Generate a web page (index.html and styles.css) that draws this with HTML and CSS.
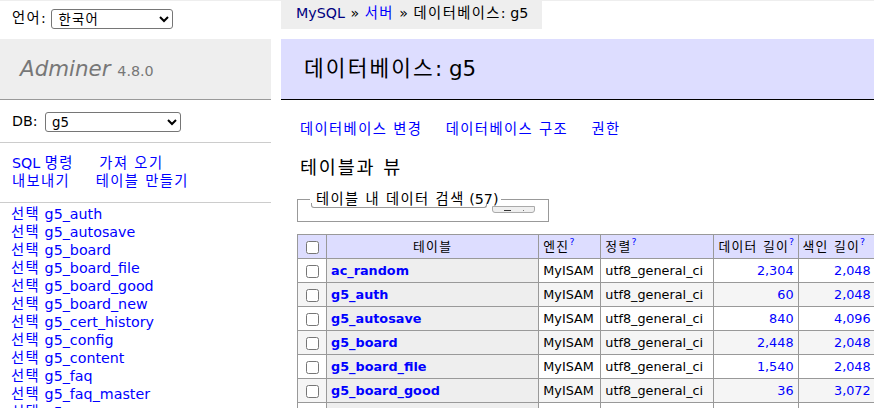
FILE: index.html
```html
<!DOCTYPE html>
<html lang="ko">
<head>
<meta charset="utf-8">
<title>데이터베이스: g5 - Adminer</title>
<link rel="stylesheet" href="styles.css">
</head>
<body>
<div class="page">
  <aside class="side">
    <div class="lang"><span class="ko">언어</span>: <select class="lang-select"><option>한국어</option></select></div>
    <h1 class="logo"><a href="#" class="brand">Adminer</a> <span class="version">4.8.0</span></h1>
    <p class="dbs">DB: <select class="db-select"><option>g5</option></select></p>
    <p class="side-links"><a href="#">SQL <span class="ko">명령</span></a> <a href="#" class="ko">가져 오기</a><br><a href="#" class="ko">내보내기</a> <a href="#" class="ko">테이블 만들기</a></p>
    <ul class="tables">
      <li><a href="#" class="ko">선택</a> <a href="#">g5_auth</a></li>
      <li><a href="#" class="ko">선택</a> <a href="#">g5_autosave</a></li>
      <li><a href="#" class="ko">선택</a> <a href="#">g5_board</a></li>
      <li><a href="#" class="ko">선택</a> <a href="#">g5_board_file</a></li>
      <li><a href="#" class="ko">선택</a> <a href="#">g5_board_good</a></li>
      <li><a href="#" class="ko">선택</a> <a href="#">g5_board_new</a></li>
      <li><a href="#" class="ko">선택</a> <a href="#">g5_cert_history</a></li>
      <li><a href="#" class="ko">선택</a> <a href="#">g5_config</a></li>
      <li><a href="#" class="ko">선택</a> <a href="#">g5_content</a></li>
      <li><a href="#" class="ko">선택</a> <a href="#">g5_faq</a></li>
      <li><a href="#" class="ko">선택</a> <a href="#">g5_faq_master</a></li>
      <li><a href="#" class="ko">선택</a> <a href="#">g5_group</a></li>
      <li><a href="#" class="ko">선택</a> <a href="#">g5_group_member</a></li>
    </ul>
  </aside>
  <main class="main">
    <p class="crumb"><a href="#" class="visited">MySQL</a> <span class="sep">»</span> <a href="#" class="ko">서버</a> <span class="sep">»</span> <span class="ko">데이터베이스</span>: g5</p>
    <div class="content">
      <h2 class="title"><span class="ko">데이터베이스</span>: g5</h2>
      <p class="links"><a href="#" class="ko">데이터베이스 변경</a> <a href="#" class="ko">데이터베이스 구조</a> <a href="#" class="ko">권한</a></p>
      <h3 class="subtitle ko">테이블과 뷰</h3>
      <fieldset class="search">
        <legend class="search-legend"><span class="ko">테이블 내 데이터 검색</span> (57)</legend>
        <span class="mini-btn"><span class="dash"></span><span class="dot"></span></span>
      </fieldset>
      <table class="tbl">
        <colgroup>
          <col class="c-check"><col class="c-name"><col class="c-engine"><col class="c-coll"><col class="c-data"><col class="c-index"><col class="c-free"><col class="c-auto"><col class="c-rows"><col class="c-comment">
        </colgroup>
        <thead>
          <tr>
            <td><input type="checkbox" class="chk"></td>
            <th class="center ko">테이블</th>
            <td><span class="ko">엔진</span><a href="#" class="q">?</a></td>
            <td><span class="ko">정렬</span><a href="#" class="q">?</a></td>
            <td><span class="ko">데이터 길이</span><a href="#" class="q">?</a></td>
            <td><span class="ko">색인 길이</span><a href="#" class="q">?</a></td>
            <td><span class="ko">데이터 여유</span><a href="#" class="q">?</a></td>
            <td><span class="ko">자동 증가</span><a href="#" class="q">?</a></td>
            <td><span class="ko">행</span><a href="#" class="q">?</a></td>
            <td class="ko">설명</td>
          </tr>
        </thead>
        <tbody>
          <tr><td><input type="checkbox" class="chk"></td><th><a href="#">ac_random</a></th><td>MyISAM</td><td>utf8_general_ci</td><td class="num"><a href="#">2,304</a></td><td class="num"><a href="#">2,048</a></td><td class="num"><a href="#">0</a></td><td class="num"><a href="#">97</a></td><td class="num">96</td><td></td></tr>
          <tr><td><input type="checkbox" class="chk"></td><th><a href="#">g5_auth</a></th><td>MyISAM</td><td>utf8_general_ci</td><td class="num"><a href="#">60</a></td><td class="num"><a href="#">2,048</a></td><td class="num"><a href="#">0</a></td><td class="num"></td><td class="num">2</td><td></td></tr>
          <tr><td><input type="checkbox" class="chk"></td><th><a href="#">g5_autosave</a></th><td>MyISAM</td><td>utf8_general_ci</td><td class="num"><a href="#">840</a></td><td class="num"><a href="#">4,096</a></td><td class="num"><a href="#">0</a></td><td class="num"><a href="#">4</a></td><td class="num">3</td><td></td></tr>
          <tr><td><input type="checkbox" class="chk"></td><th><a href="#">g5_board</a></th><td>MyISAM</td><td>utf8_general_ci</td><td class="num"><a href="#">2,448</a></td><td class="num"><a href="#">2,048</a></td><td class="num"><a href="#">0</a></td><td class="num"></td><td class="num">6</td><td></td></tr>
          <tr><td><input type="checkbox" class="chk"></td><th><a href="#">g5_board_file</a></th><td>MyISAM</td><td>utf8_general_ci</td><td class="num"><a href="#">1,540</a></td><td class="num"><a href="#">2,048</a></td><td class="num"><a href="#">0</a></td><td class="num"></td><td class="num">7</td><td></td></tr>
          <tr><td><input type="checkbox" class="chk"></td><th><a href="#">g5_board_good</a></th><td>MyISAM</td><td>utf8_general_ci</td><td class="num"><a href="#">36</a></td><td class="num"><a href="#">3,072</a></td><td class="num"><a href="#">0</a></td><td class="num"><a href="#">2</a></td><td class="num">1</td><td></td></tr>
          <tr><td><input type="checkbox" class="chk"></td><th><a href="#">g5_board_new</a></th><td>MyISAM</td><td>utf8_general_ci</td><td class="num"><a href="#">1,872</a></td><td class="num"><a href="#">3,072</a></td><td class="num"><a href="#">0</a></td><td class="num"><a href="#">53</a></td><td class="num">52</td><td></td></tr>
        </tbody>
      </table>
    </div>
  </main>
</div>
</body>
</html>
```
FILE: styles.css
```css
html, body {
  margin: 0;
  padding: 0;
}
body {
  background: #fff;
  color: #000;
  font: 14.25px/1.25 "DejaVu Sans", "Noto Sans CJK KR", sans-serif;
  overflow: hidden;
}
a {
  color: #00f;
  text-decoration: none;
}
a.visited {
  color: #000080;
}
.ko {
  letter-spacing: 0.1em;
}

.page {
  display: grid;
  grid-template-columns: 271px minmax(0, 1fr);
  column-gap: 10px;
  border-top: 1px solid #eee;
  align-items: start;
}

/* ---------- sidebar ---------- */
.lang {
  height: 38px;
  box-sizing: border-box;
  padding: 4px 12px 0;
  line-height: 26px;
  white-space: nowrap;
}
.lang-select,
.db-select {
  height: 20px;
  box-sizing: border-box;
  vertical-align: middle;
  font: 13.33px "DejaVu Sans", "Noto Sans CJK KR", sans-serif;
  padding: 0 0 0 2px;
  border: 1px solid #767676;
  border-radius: 3px;
  background: #fff;
  color: #000;
}
.lang-select {
  width: 122px;
  margin: 0 0 0 1px;
  letter-spacing: 0.1em;
}
.db-select {
  width: 136px;
  margin: 0 0 0 3px;
}

.logo {
  margin: 0;
  padding: 17px 20px;
  height: 26px;
  line-height: 26px;
  font-size: 21.4px;
  font-weight: normal;
  color: #777;
  background: #eee;
  border-bottom: 1px solid #999;
  white-space: nowrap;
}
.brand {
  color: #777;
  font-style: italic;
}
.version {
  font-size: 14.3px;
  line-height: 1;
  color: #777;
}

.dbs {
  margin: 0;
  height: 18px;
  padding: 12px 12px;
  line-height: 18px;
  border-bottom: 1px solid #ccc;
  white-space: nowrap;
}
.side-links {
  margin: 0;
  height: 36px;
  padding: 11px 12px 12px;
  line-height: 18px;
  border-bottom: 1px solid #ccc;
}
.side-links a {
  margin-right: 21px;
  white-space: nowrap;
}
.tables {
  margin: 0;
  padding: 2px 11px 12px;
  list-style: none;
  line-height: 18px;
  white-space: nowrap;
}

/* ---------- main ---------- */
.crumb {
  margin: 0;
  width: fit-content;
  height: 28px;
  padding: 0 14px 0 15px;
  line-height: 24px;
  background: #eee;
  white-space: nowrap;
}
.sep {
  margin: 0 1px;
}
.content {
  padding: 10px 0 0 16px;
}
.title {
  margin: 0 0 20px -16px;
  padding: 17px 23px;
  height: 26px;
  font-size: 21.4px;
  line-height: 26px;
  font-weight: normal;
  background: #ddf;
  border-bottom: 1px solid #000;
  white-space: nowrap;
}
.links {
  margin: 0;
  padding-left: 3px;
  line-height: 18px;
  white-space: nowrap;
}
.links a {
  margin-right: 19px;
}
.subtitle {
  margin: 18px 0 0;
  padding-left: 3px;
  font-size: 18.5px;
  line-height: 23px;
  font-weight: normal;
}

.search {
  position: relative;
  display: block;
  width: 252px;
  box-sizing: border-box;
  min-width: 0;
  margin: 11px 0 0;
  padding: 0 11px 13px;
  border: 1px solid #999;
}
.search-legend {
  position: relative;
  margin-left: 1px;
  padding: 0 3px 0 6px;
  line-height: 18px;
  white-space: nowrap;
}
.search-legend::after {
  content: "";
  position: absolute;
  left: 1px;
  top: 13px;
  width: 174px;
  height: 4px;
  border: 1px solid #999;
  border-top: 0;
  border-radius: 0 0 3px 3px;
}
.mini-btn {
  position: absolute;
  left: 194px;
  top: -2px;
  width: 41px;
  height: 5px;
  background: #efefef;
  border: 1px solid #aaa;
  border-radius: 0 0 3px 3px;
}
.dash {
  position: absolute;
  left: 11px;
  top: 3px;
  width: 7px;
  height: 1px;
  background: #333;
}
.dot {
  position: absolute;
  left: 30px;
  top: 3px;
  width: 1px;
  height: 1px;
  background: #777;
}

/* ---------- table ---------- */
.tbl {
  margin-top: 12px;
  border-collapse: collapse;
  table-layout: fixed;
  width: 881px;
  font-size: 12.8px;
  line-height: 16px;
}
.c-check { width: 29px; }
.c-name { width: 212px; }
.c-engine { width: 62px; }
.c-coll { width: 113px; }
.c-data { width: 84px; }
.c-index { width: 77px; }
.c-free { width: 84px; }
.c-auto { width: 80px; }
.c-rows { width: 58px; }
.c-comment { width: 80px; }

.tbl td,
.tbl th {
  border: 1px solid #999;
  padding: 0 4px;
  height: 23px;
  box-sizing: content-box;
  white-space: nowrap;
  overflow: hidden;
  text-align: left;
}
.tbl thead td,
.tbl thead th {
  background: #ddf;
  font-weight: normal;
}
.tbl thead th.center {
  text-align: center;
}
.tbl tbody th {
  background: #eee;
  font-weight: bold;
}
.tbl tbody tr:nth-child(even) td {
  background: #f5f5f5;
}
.tbl .num {
  text-align: right;
}
.chk {
  width: 13px;
  height: 13px;
  margin: 0 3px 0 4px;
  vertical-align: middle;
}
.q {
  font-size: 9.5px;
  line-height: 0;
  vertical-align: 6px;
  letter-spacing: 0;
}
```
